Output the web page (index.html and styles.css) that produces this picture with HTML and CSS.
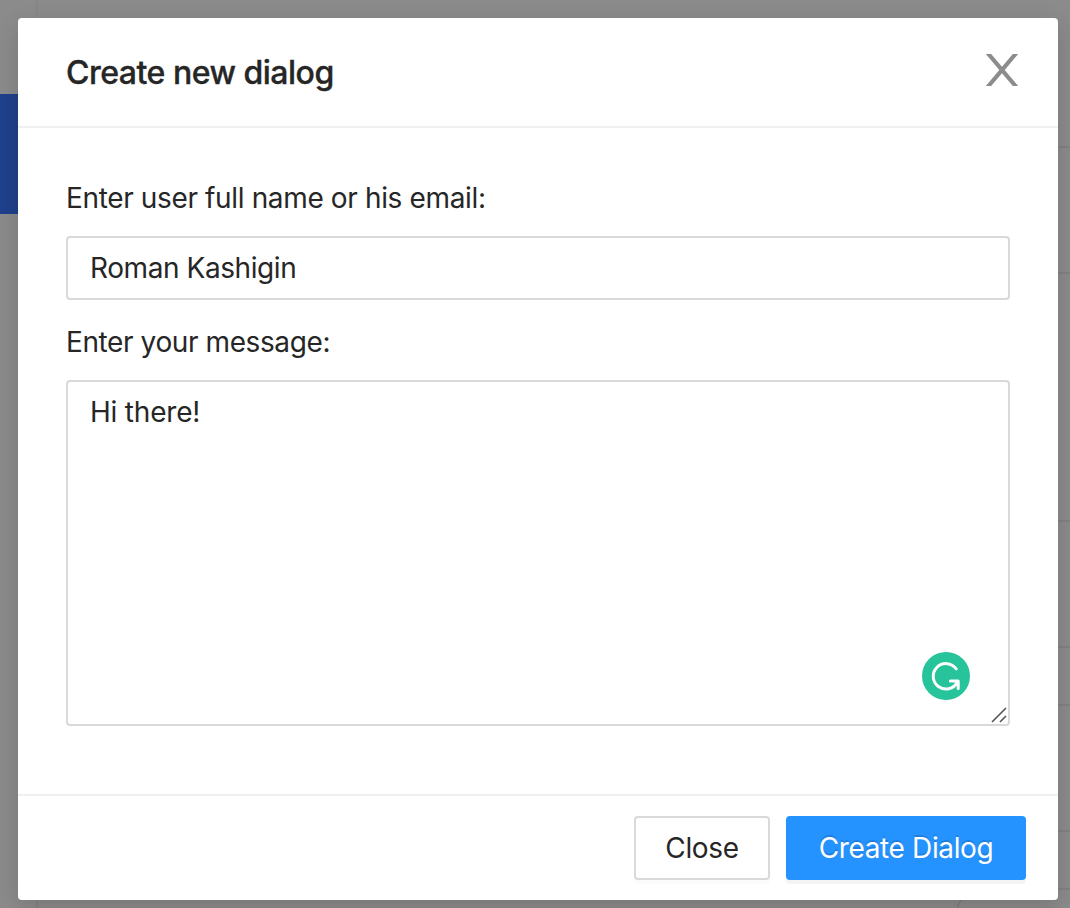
FILE: index.html
```html
<!DOCTYPE html>
<html lang="en">
<head>
<meta charset="utf-8">
<title>Create new dialog</title>
<link rel="stylesheet" href="styles.css">
</head>
<body>
<svg class="backdrop" width="1070" height="908" viewBox="0 0 1070 908" aria-hidden="true">
  <rect class="selected" x="0" y="94" width="36" height="120"/>
  <path class="edge" d="M37 0V908"/>
  <path class="rule" d="M1040 147H1070M1040 273H1070M1040 521H1070M1040 647H1070M1040 705H1070M1040 831H1070M1040 889H1070"/>
  <path class="curve" d="M957 910Q959 900 966 895"/>
</svg>
<form class="modal">
  <header class="modal-header">
    <h1 class="modal-title">Create new dialog</h1>
    <svg class="close-icon" width="34" height="34" viewBox="0 0 34 34" role="img" aria-label="Close">
      <path d="M.8 1H6.2L17 13.8L27.8 1H33.2L19.7 17L33.2 33H27.8L17 20.2L6.2 33H.8L14.3 17Z"/>
    </svg>
  </header>
  <div class="modal-body">
    <label class="label label-name" for="name">Enter user full name or his email:</label>
    <input class="field" id="name" type="text" value="Roman Kashigin" spellcheck="false">
    <label class="label label-message" for="message">Enter your message:</label>
    <div class="message-box">
      <textarea class="field field-area" id="message" spellcheck="false">Hi there!</textarea>
      <svg class="assistant" width="48" height="48" viewBox="0 0 48 48" aria-hidden="true">
        <circle cx="24" cy="24" r="24" fill="#27c39a"/>
        <g fill="none" stroke="#fff" stroke-width="3" stroke-linecap="round" stroke-linejoin="round">
          <path d="M34.2 16.8A12.7 12.7 0 1 0 35.2 30.2"/>
          <path d="M28.4 28.9H36.2V36.6"/>
        </g>
      </svg>
      <svg class="grip" width="16" height="16" viewBox="0 0 16 16" aria-hidden="true">
        <path d="M1 15L15 1M9 15L15 9"/>
      </svg>
    </div>
  </div>
  <footer class="modal-footer">
    <button class="btn btn-close" type="button">Close</button>
    <button class="btn btn-primary" type="button">Create Dialog</button>
  </footer>
</form>
</body>
</html>
```
FILE: styles.css
```css
* { box-sizing: border-box; }

body {
  margin: 0;
  height: 908px;
  padding: 18px 12px 8px 18px;
  overflow: hidden;
  background: #8b8b8b;
  color: #262626;
  font: 28px/44px Inter, "Liberation Sans", sans-serif;
}

.backdrop {
  position: absolute;
  left: 0;
  top: 0;
}

.selected { fill: #1f418c; }

.edge {
  stroke: #868686;
  stroke-width: 2;
}

.rule {
  fill: none;
  stroke: #828282;
  stroke-width: 2;
}

.curve {
  fill: none;
  stroke: #7d7d7d;
  stroke-width: 1.5;
}

.modal {
  position: relative;
  display: flex;
  flex-direction: column;
  height: 882px;
  background: #fff;
  border-radius: 4px;
  box-shadow: 0 8px 24px rgba(0, 0, 0, .15);
}

.modal-header {
  display: flex;
  align-items: flex-start;
  justify-content: space-between;
  height: 110px;
  padding: 32px 39px 32px 48px;
  border-bottom: 2px solid #f0f0f0;
}

.modal-title {
  margin: 0;
  font-size: 32px;
  line-height: 46px;
  font-weight: 500;
  letter-spacing: -.5px;
  -webkit-text-stroke: .35px;
}

.close-icon {
  margin-top: 3px;
  fill: #8c8c8c;
}

.modal-body {
  flex: 1;
  display: flex;
  flex-direction: column;
  padding: 48px;
}

.label {
  display: block;
  letter-spacing: -.36px;
}

.label-message {
  margin-top: 20px;
  letter-spacing: -.4px;
}

.field {
  display: block;
  width: 100%;
  height: 64px;
  margin: 16px 0 0;
  padding: 8px 22px;
  border: 2px solid #d9d9d9;
  border-radius: 4px;
  outline: 0;
  background: #fff;
  color: inherit;
  font: inherit;
  letter-spacing: -.42px;
}

.message-box { position: relative; }

.field-area {
  height: 346px;
  resize: none;
  letter-spacing: -.2px;
}

.assistant {
  position: absolute;
  right: 40px;
  bottom: 26px;
}

.grip {
  position: absolute;
  right: 3px;
  bottom: 3px;
  fill: none;
  stroke: #555;
  stroke-width: 1.6;
}

.modal-footer {
  display: flex;
  justify-content: flex-end;
  gap: 16px;
  padding: 20px 32px;
  border-top: 2px solid #f0f0f0;
}

.btn {
  height: 64px;
  padding: 0;
  border: 2px solid #d9d9d9;
  border-radius: 4px;
  background: #fff;
  color: inherit;
  font: inherit;
  letter-spacing: -.36px;
  box-shadow: 0 4px 0 rgba(0, 0, 0, .016);
}

.btn-close { width: 136px; }

.btn-primary {
  width: 240px;
  border-color: #2492ff;
  background: #2492ff;
  color: #fff;
  text-shadow: 0 -2px 0 rgba(0, 0, 0, .12);
  box-shadow: 0 4px 0 rgba(0, 0, 0, .045);
}
```
